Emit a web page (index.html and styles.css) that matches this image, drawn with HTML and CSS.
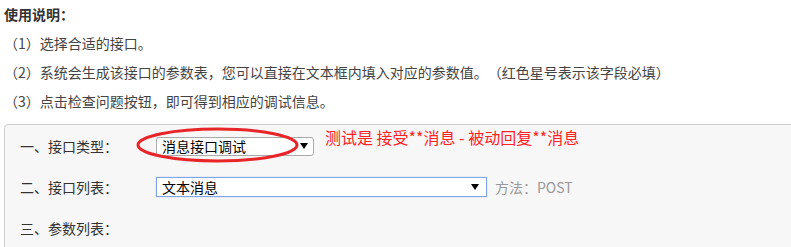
FILE: index.html
```html
<!DOCTYPE html>
<html lang="zh-CN">
<head>
<meta charset="utf-8">
<title>接口调试</title>
<link rel="stylesheet" href="styles.css">
</head>
<body>
<div class="guide">
  <div class="guide-title">使用说明：</div>
  <div class="guide-line">（1）选择合适的接口。</div>
  <div class="guide-line">（2）系统会生成该接口的参数表，您可以直接在文本框内填入对应的参数值。（红色星号表示该字段必填）</div>
  <div class="guide-line">（3）点击检查问题按钮，即可得到相应的调试信息。</div>
</div>
<div class="panel">
  <div class="row row-first">
    <div class="label">一、接口类型：</div>
    <div class="field">
      <div class="select select-type">
        <span class="select-text">消息接口调试</span>
        <span class="arrow"></span>
      </div>
    </div>
    <div class="note">测试是 接受**消息 - 被动回复**消息</div>
    <svg class="mark" width="164" height="36" viewBox="0 0 164 36">
      <ellipse cx="81.5" cy="18" rx="79.5" ry="16" fill="none" stroke="#e8262a" stroke-width="3"/>
    </svg>
  </div>
  <div class="row">
    <div class="label">二、接口列表：</div>
    <div class="field">
      <div class="select select-list">
        <span class="select-text">文本消息</span>
        <span class="arrow"></span>
      </div>
    </div>
    <div class="method">方法：POST</div>
  </div>
  <div class="row">
    <div class="label">三、参数列表：</div>
  </div>
</div>
</body>
</html>
```
FILE: styles.css
```css
html {
  overflow: hidden;
}
body {
  margin: 0 0 0 4px;
  font-family: "Noto Sans CJK SC", "Noto Sans", sans-serif;
  font-size: 14px;
  color: #333;
  background: #fff;
  text-spacing-trim: space-all;
}
.guide-title,
.guide-line {
  line-height: 29px;
  height: 29px;
  white-space: nowrap;
}
.guide-title {
  font-weight: bold;
  color: #333;
}
.guide-line {
  color: #444;
}
.panel {
  margin-top: 8px;
  margin-right: -20px;
  border: 1px solid #cfcfcf;
  border-radius: 4px;
  background: #f7f7f7;
  padding: 0 0 0 15px;
  height: 130px;
}
.row {
  display: flex;
  align-items: center;
  height: 41px;
  position: relative;
}
.label {
  width: 136px;
  flex: none;
  color: #333;
  line-height: 20px;
}
.field {
  flex: none;
}
.select {
  position: relative;
  background: #fff;
  box-sizing: border-box;
  color: #000;
  line-height: 18px;
  padding-left: 5px;
}
.select-type {
  width: 158px;
  height: 19px;
  border: 1px solid #a9a9a9;
  border-radius: 3px;
  line-height: 16px;
  margin-top: 1px;
}
.select-list {
  width: 331px;
  height: 20px;
  border: 1px solid #7fa6e3;
  box-shadow: 0 0 1px #9cbcf0;
}
.select-text {
  font-size: 14px;
}
.arrow {
  position: absolute;
  width: 0;
  height: 0;
  border-left: 4px solid transparent;
  border-right: 4px solid transparent;
  border-top: 6px solid #000;
  top: 50%;
  margin-top: -3px;
}
.select-type .arrow {
  right: 5px;
}
.select-list .arrow {
  right: 7px;
}
.note {
  align-self: flex-start;
  margin-top: 1px;
  margin-left: 11px;
  font-size: 16px;
  line-height: 22px;
  color: #f22;
  white-space: nowrap;
}
.method {
  margin-left: 8px;
  color: #999;
}
.mark {
  position: absolute;
  left: 116px;
  top: 2px;
}
```
